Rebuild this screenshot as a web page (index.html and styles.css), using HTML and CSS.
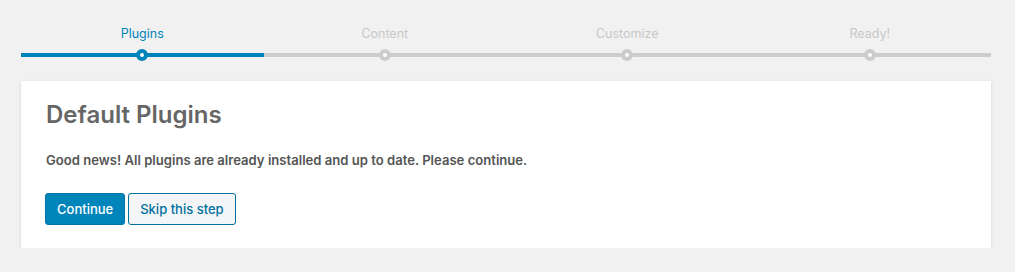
FILE: index.html
```html
<!DOCTYPE html>
<html>
<head>
  <title>Setup Wizard</title>
  <link rel="stylesheet" href="styles.css">
</head>
<body>
  <div class="wizard">
    <ol class="steps">
      <li class="step done">
        <span class="step-label">Plugins</span>
        <span class="step-track"><span class="step-dot"></span></span>
      </li>
      <li class="step">
        <span class="step-label">Content</span>
        <span class="step-track"><span class="step-dot"></span></span>
      </li>
      <li class="step">
        <span class="step-label">Customize</span>
        <span class="step-track"><span class="step-dot"></span></span>
      </li>
      <li class="step">
        <span class="step-label">Ready!</span>
        <span class="step-track"><span class="step-dot"></span></span>
      </li>
    </ol>

    <div class="card">
      <h1>Default Plugins</h1>
      <p>Good news! All plugins are already installed and up to date. Please continue.</p>
      <div class="actions">
        <button class="btn btn-primary">Continue</button>
        <button class="btn btn-secondary">Skip this step</button>
      </div>
    </div>
  </div>
</body>
</html>
```

FILE: styles.css
```css
body {
  margin: 0;
  background-color: #f1f1f1;
  font-family: Inter, "Liberation Sans", sans-serif;
}
.wizard {
  width: 970px;
  margin: 0 0 0 21px;
}
.steps {
  list-style: none;
  margin: 0;
  padding: 26px 0 0;
  display: grid;
  grid-template-columns: repeat(4, 1fr);
}
.step {
  display: flex;
  flex-direction: column;
  align-items: center;
}
.step-label {
  font-size: 12.5px;
  line-height: 16px;
  color: #c8c8c8;
}
.step.done .step-label {
  color: #0085ba;
}
.step-track {
  position: relative;
  align-self: stretch;
  height: 4px;
  margin-top: 11px;
  background-color: #cccccc;
}
.step.done .step-track {
  background-color: #0085ba;
}
.step-dot {
  position: absolute;
  left: 50%;
  top: 50%;
  width: 4px;
  height: 4px;
  margin: -6px 0 0 -6px;
  border: 4px solid #cccccc;
  border-radius: 50%;
  background-color: #fff;
}
.step.done .step-dot {
  border-color: #0085ba;
}
.card {
  margin-top: 24px;
  background-color: #fff;
  padding: 19px 24px 23px;
  box-shadow: 0 1px 3px rgba(0,0,0,0.13);
}
.card h1 {
  margin: 0 0 0 1px;
  font-size: 24px;
  line-height: 30px;
  font-weight: 600;
  color: #666;
}
.card p {
  margin: 21px 0 0 1px;
  font-size: 13.1px;
  line-height: 18px;
  font-weight: 600;
  color: #555;
}
.actions {
  display: flex;
  gap: 3px;
  margin-top: 24px;
}
.btn {
  height: 32px;
  padding: 0 11px;
  border-radius: 3px;
  font-family: inherit;
  font-size: 13px;
  font-weight: 500;
  cursor: pointer;
}
.btn-primary {
  background-color: #0085ba;
  border: 1px solid #0073aa;
  color: #fff;
}
.btn-secondary {
  background-color: #f3f5f6;
  border: 1px solid #0071a1;
  color: #0071a1;
}
```
